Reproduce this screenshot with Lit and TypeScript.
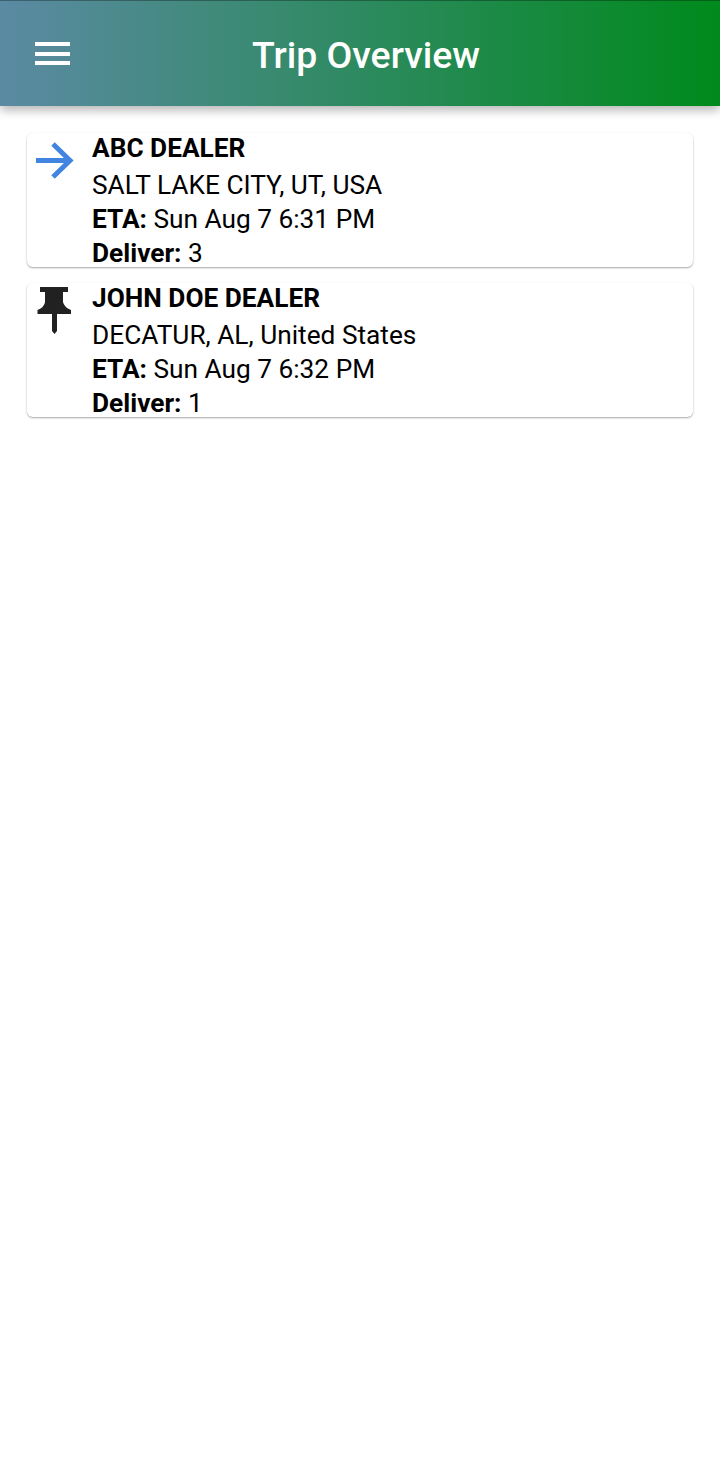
import { LitElement, html, css, svg } from 'lit';
import { customElement } from 'lit/decorators.js';

const stops = [
  { name: 'ABC DEALER', place: 'SALT LAKE CITY, UT, USA', eta: 'Sun Aug 7 6:31 PM', deliver: 3, icon: 'arrow' },
  { name: 'JOHN DOE DEALER', place: 'DECATUR, AL, United States', eta: 'Sun Aug 7 6:32 PM', deliver: 1, icon: 'pin' },
];

const arrow = svg`<path d="M5 24.500h34M22 8l17 16.500L22 41" fill="none" stroke="#4285e0" stroke-width="5"/>`;
const pin = svg`<path d="M9 1h28v5h-5v10q1 5 8 8v4H26v17l-2.500 3-2.500-3V28H6.500v-4q7-3 7.500-8V6H9z" fill="#212121"/>`;

@customElement('app-root')
export class AppRoot extends LitElement {
  static styles = css`
    :host {
      display: block;
      min-height: 1466px;
      background: #fff;
      font-family: Roboto, sans-serif;
      color: #000;
    }

    header {
      height: 106px;
      box-sizing: border-box;
      display: flex;
      align-items: center;
      padding: 0 35px;
      background: linear-gradient(90deg, #5b8aa3, #008a1c);
      border-top: 1px solid rgba(0, 0, 0, 0.3);
      box-shadow: 0 4px 10px rgba(0, 0, 0, 0.3);
    }

    .menu {
      width: 35px;
      height: 23px;
      display: flex;
      flex-direction: column;
      justify-content: space-between;
    }

    .menu span {
      height: 4px;
      background: #fff;
    }

    h1 {
      margin: 2px 0 0 182px;
      font-size: 37.4px;
      font-weight: 500;
      color: #fff;
      white-space: nowrap;
    }

    .list {
      display: flex;
      flex-direction: column;
      gap: 16px;
      padding: 27px 27px 0;
    }

    .card {
      display: flex;
      height: 134px;
      box-sizing: border-box;
      background: #fff;
      border-radius: 6px;
      box-shadow: 0 1px 2px rgba(0, 0, 0, 0.35);
      overflow: hidden;
    }

    .icon {
      width: 48px;
      height: 50px;
      flex: none;
      margin: 3px 0 0 4px;
    }

    .body {
      margin-left: 13px;
      font-size: 26.25px;
      line-height: 34px;
    }

    .title {
      font-weight: 700;
      line-height: 30px;
      margin-bottom: 5px;
    }

    b {
      font-weight: 700;
    }
  `;

  render() {
    return html`
      <header>
        <div class="menu"><span></span><span></span><span></span></div>
        <h1>Trip Overview</h1>
      </header>
      <div class="list">
        ${stops.map(
          (s) => html`
            <div class="card">
              <svg class="icon" viewBox="0 0 48 50">${s.icon === 'arrow' ? arrow : pin}</svg>
              <div class="body">
                <div class="title">${s.name}</div>
                <div>${s.place}</div>
                <div><b>ETA:</b> ${s.eta}</div>
                <div><b>Deliver:</b> ${s.deliver}</div>
              </div>
            </div>
          `,
        )}
      </div>
    `;
  }
}
